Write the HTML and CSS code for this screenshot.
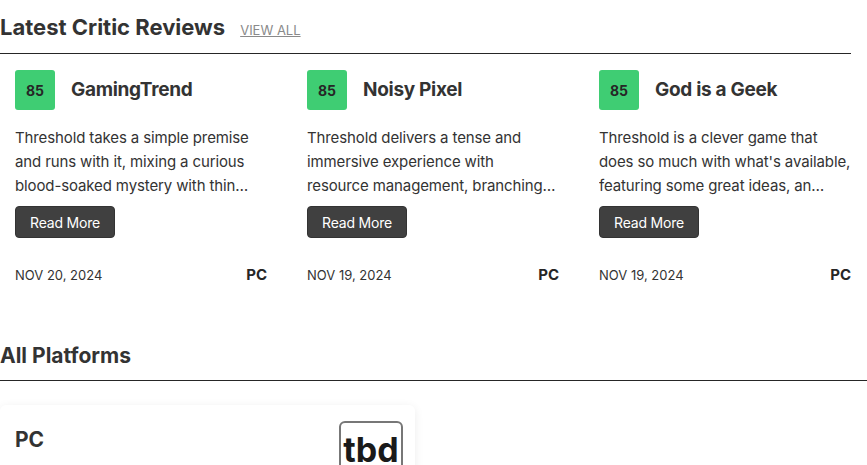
FILE: index.html
```html
<!DOCTYPE html>
<html>
<head>
<meta charset="utf-8">
<link rel="stylesheet" href="styles.css">
</head>
<body>
<section class="reviews">
  <div class="section-head">
    <h2 class="title">Latest Critic Reviews</h2>
    <a class="view-all" href="#">VIEW ALL</a>
  </div>
  <div class="cards">
    <div class="card">
      <div class="card-top">
        <div class="score">85</div>
        <div class="critic">GamingTrend</div>
      </div>
      <p class="quote">Threshold takes a simple premise and runs with it, mixing a curious blood-soaked mystery with thin…</p>
      <button class="btn">Read More</button>
      <div class="meta"><span class="date">NOV 20, 2024</span><span class="plat">PC</span></div>
    </div>
    <div class="card">
      <div class="card-top">
        <div class="score">85</div>
        <div class="critic">Noisy Pixel</div>
      </div>
      <p class="quote">Threshold delivers a tense and immersive experience with resource management, branching…</p>
      <button class="btn">Read More</button>
      <div class="meta"><span class="date">NOV 19, 2024</span><span class="plat">PC</span></div>
    </div>
    <div class="card">
      <div class="card-top">
        <div class="score">85</div>
        <div class="critic">God is a Geek</div>
      </div>
      <p class="quote">Threshold is a clever game that does so much with what's available, featuring some great ideas, an…</p>
      <button class="btn">Read More</button>
      <div class="meta"><span class="date">NOV 19, 2024</span><span class="plat">PC</span></div>
    </div>
  </div>
</section>
<section class="platforms">
  <div class="section-head wide">
    <h2 class="title">All Platforms</h2>
  </div>
  <div class="plat-card">
    <div class="plat-name">PC</div>
    <div class="tbd">tbd</div>
  </div>
</section>
</body>
</html>
```
FILE: styles.css
```css
* { box-sizing: border-box; }
body {
  margin: 0;
  background: #fff;
  font-family: "Inter", "Lato", sans-serif;
  color: #262626;
  overflow: hidden;
}
.reviews { width: 851px; }
.section-head {
  display: flex;
  align-items: baseline;
  gap: 15px;
  height: 54px;
  padding-top: 14px;
  border-bottom: 1px solid #262626;
}
.title {
  margin: 0;
  font-size: 22px;
  font-weight: 700;
  color: #333;
}
.view-all {
  font-size: 13px;
  color: #8a8a8a;
  text-decoration: underline;
}
.cards {
  display: grid;
  grid-template-columns: repeat(3, 252px);
  gap: 40px;
  padding-left: 15px;
  padding-top: 16px;
}
.card { display: flex; flex-direction: column; }
.card-top { display: flex; align-items: center; gap: 16px; }
.score {
  width: 40px;
  height: 40px;
  background: #3fcd73;
  border-radius: 3px;
  display: flex;
  align-items: center;
  justify-content: center;
  font-weight: 700;
  font-size: 14px;
  color: #262626;
}
.critic { font-size: 19px; font-weight: 700; color: #333; margin-top: -2px; letter-spacing: -0.3px; }
.quote {
  margin: 16px 0 0;
  font-size: 15px;
  line-height: 24px;
  letter-spacing: -0.12px;
  color: #333;
  height: 72px;
  display: -webkit-box;
  -webkit-box-orient: vertical;
  -webkit-line-clamp: 3;
  overflow: hidden;
}
.btn {
  margin-top: 8px;
  width: 100px;
  height: 32px;
  background: #404040;
  color: #fff;
  border: 1px solid #333;
  border-radius: 4px;
  font-family: inherit;
  font-size: 14px;
  letter-spacing: -0.2px;
  padding: 0;
}
.meta {
  margin-top: 27px;
  display: flex;
  justify-content: space-between;
  align-items: baseline;
}
.date { font-size: 13px; color: #333; }
.plat { font-size: 15px; font-weight: 700; color: #262626; }
.platforms { margin-top: 57px; }
.section-head.wide { width: 867px; height: 40px; padding-top: 2px; }
.platforms .title { font-size: 21px; }
.plat-card {
  margin-top: 24px;
  width: 415px;
  height: 80px;
  background: #fff;
  border-radius: 6px;
  box-shadow: 0 2px 10px rgba(0,0,0,0.08);
  display: flex;
  justify-content: space-between;
  align-items: flex-start;
  padding: 16px 12px 0 15px;
}
.plat-name { font-size: 21px; font-weight: 700; color: #333; margin-top: 6px; }
.tbd {
  width: 64px;
  height: 64px;
  border: 2px solid #777;
  border-radius: 6px;
  font-size: 34px;
  font-weight: 700;
  color: #1a1a1a;
  text-align: center;
  padding-top: 10px;
  line-height: 1;
}
```
